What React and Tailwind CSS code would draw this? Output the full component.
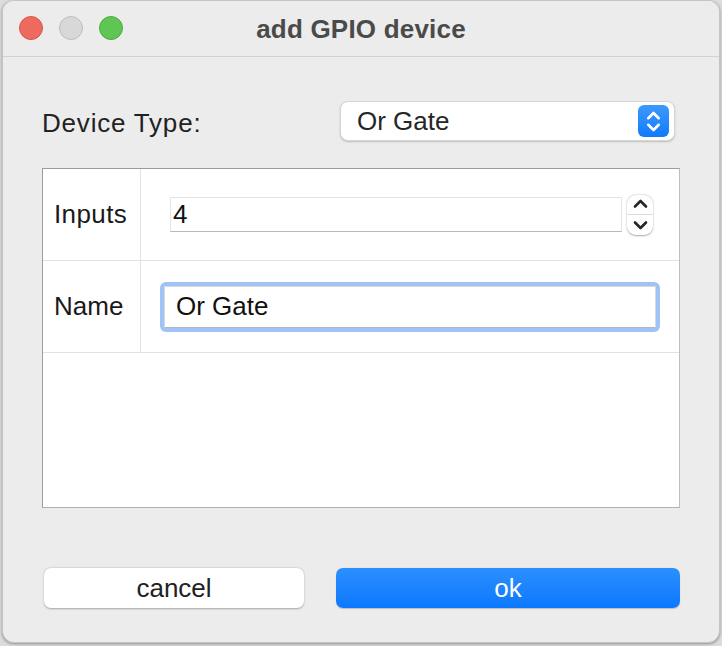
import React from 'react';

const font = { fontFamily: '"Liberation Sans", Arial, sans-serif' };

function Chevrons({ className = 'text-white', size = 18 }) {
  return (
    <svg width={size} height={size + 8} viewBox="0 0 18 26" fill="none" stroke="currentColor" strokeWidth={2.8} strokeLinecap="round" strokeLinejoin="round" className={className}>
      <path d="M3.5 9.5l5.5-5.5 5.5 5.5" />
      <path d="M3.5 16.5l5.5 5.5 5.5-5.5" />
    </svg>
  );
}

export default function App() {
  return (
    <div className="w-[722px] h-[646px] bg-[#dcdcdc] overflow-hidden" style={font}>
      <div className="ml-[2px] w-[718px] h-[643px] bg-[#ececec] rounded-[12px] border border-[#c4c4c4] shadow-[0_1px_3px_rgba(0,0,0,0.35)] flex flex-col overflow-hidden">
        {/* title bar */}
        <div className="relative h-[56px] shrink-0 border-b border-[#d2d2d2] bg-[#ececec] flex items-center justify-center">
          <div className="absolute left-[16px] top-[15px] flex gap-[16px]">
            <div className="w-[24px] h-[24px] rounded-full bg-[#ee6a5e] border border-[#d5574c]" />
            <div className="w-[24px] h-[24px] rounded-full bg-[#d8d8d8] border border-[#bdbdbd]" />
            <div className="w-[24px] h-[24px] rounded-full bg-[#5fc553] border border-[#4ea944]" />
          </div>
          <span className="text-[26px] font-bold text-[#4a4a4a] leading-none tracking-[0.2px]">add GPIO device</span>
        </div>

        <div className="px-[39px] flex flex-col">
          {/* device type */}
          <div className="mt-[44px] flex items-center pr-[5px]">
            <span className="flex-1 text-[26px] text-[#222] leading-none pt-[4px] tracking-[0.8px]">Device Type:</span>
            <div className="w-[335px] h-[40px] bg-white rounded-[8px] border border-[#d6d6d6] shadow-[0_1px_2px_rgba(0,0,0,0.2)] flex items-center pl-[16px] pr-[5px]">
              <span className="flex-1 text-[26px] text-[#262626] leading-none">Or Gate</span>
              <div className="w-[31px] h-[32px] rounded-[6px] bg-gradient-to-b from-[#3c98fc] to-[#0b7bff] flex items-center justify-center">
                <Chevrons size={17} />
              </div>
            </div>
          </div>

          {/* table */}
          <div className="mt-[27px] h-[340px] bg-white border border-[#9c9c9c] border-r-[#bdbdbd] border-b-[#b0b0b0] flex flex-col">
            <div className="h-[92px] flex border-b border-[#e2e2e2]">
              <div className="w-[98px] border-r border-[#e2e2e2] flex items-center pl-[11px] text-[26px] text-[#1a1a1a] tracking-[0.4px]">Inputs</div>
              <div className="flex-1 flex items-center pl-[29px]">
                <div className="w-[452px] h-[35px] bg-white border border-[#e4e4e4] border-b-[#b8b8b8] flex items-center pl-[2px] text-[26px] text-[#111]">4</div>
                <div className="ml-[5px] w-[26px] h-[40px] rounded-[9px] bg-white shadow-[0_0.5px_2px_rgba(0,0,0,0.35)] flex flex-col">
                  <div className="flex-1 flex items-center justify-center border-b border-[#dcdcdc]">
                    <svg width="15" height="10" viewBox="0 0 15 10" fill="none" stroke="#262626" strokeWidth={2.6} strokeLinecap="round" strokeLinejoin="round"><path d="M2 7.5l5.5-5.5 5.5 5.5" /></svg>
                  </div>
                  <div className="flex-1 flex items-center justify-center">
                    <svg width="15" height="10" viewBox="0 0 15 10" fill="none" stroke="#262626" strokeWidth={2.6} strokeLinecap="round" strokeLinejoin="round"><path d="M2 2.5l5.5 5.5 5.5-5.5" /></svg>
                  </div>
                </div>
              </div>
            </div>
            <div className="h-[92px] flex border-b border-[#e2e2e2]">
              <div className="w-[98px] border-r border-[#e2e2e2] flex items-center pl-[11px] text-[26px] text-[#1a1a1a]">Name</div>
              <div className="flex-1 flex items-center pl-[19px]">
                <div className="w-[500px] h-[50px] rounded-[6px] bg-[#9fc3f8] p-[4px]">
                  <div className="w-full h-full bg-white border border-[#d8d8d8] border-b-[#b5b5b5] flex items-center pl-[11px] text-[26px] text-[#111]">Or Gate</div>
                </div>
              </div>
            </div>
            <div className="flex-1" />
          </div>

          {/* buttons */}
          <div className="mt-[60px] flex gap-[32px] pl-[2px]">
            <button className="w-[260px] h-[40px] bg-white rounded-[7px] shadow-[0_0.5px_2px_rgba(0,0,0,0.3)] text-[26px] text-[#222] leading-none">cancel</button>
            <button className="w-[344px] h-[40px] rounded-[7px] bg-gradient-to-b from-[#2b8ffd] to-[#0a78ff] shadow-[0_0.5px_1px_rgba(0,0,0,0.2)] text-[26px] text-white leading-none">ok</button>
          </div>
        </div>
      </div>
    </div>
  );
}
